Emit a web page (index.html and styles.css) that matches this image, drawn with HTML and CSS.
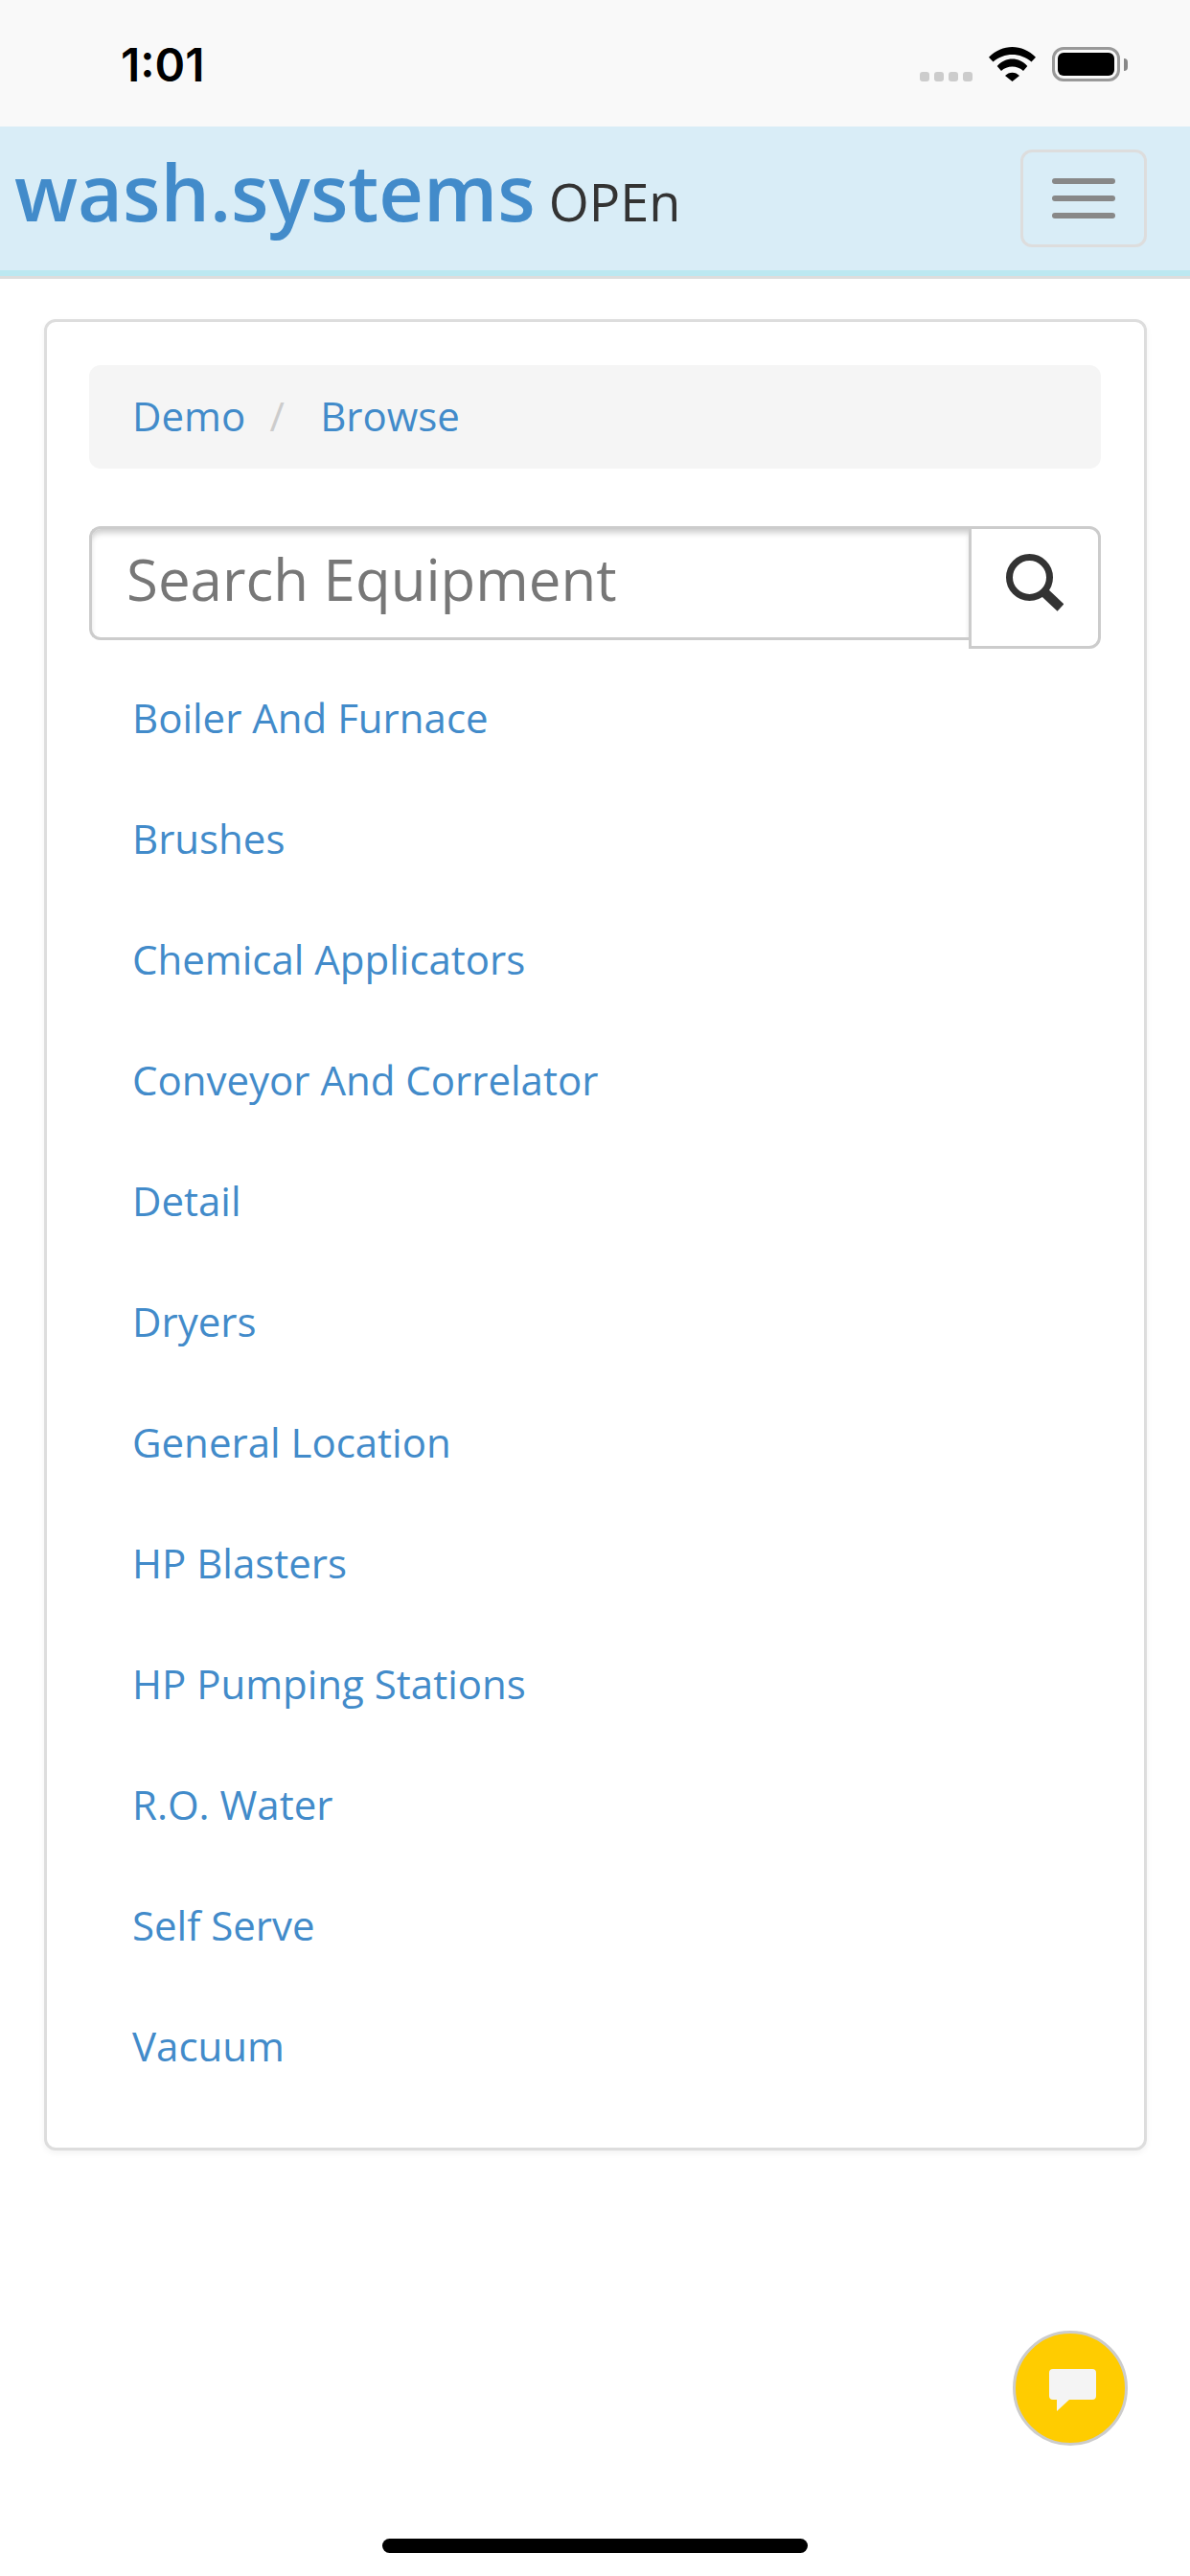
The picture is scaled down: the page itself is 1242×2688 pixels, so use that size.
FILE: index.html
```html
<!DOCTYPE html>
<html lang="en">
<head>
    <meta charset="UTF-8">
    <meta name="viewport" content="width=device-width, initial-scale=1.0">
    <title>Browse Equipment</title>
    <link rel="stylesheet" href="styles.css">
</head>
<body>
    <div class="status-bar">
        <span class="status-time">1:01</span>
        <div class="status-icons">
            <div class="signal"><i></i><i></i><i></i><i></i></div>
            <svg class="wifi" width="49" height="36" viewBox="0 0 49 36">
                <path d="M0 10.7C14-3.5 35-3.5 49 10.7L44.5 15.5C33 5.5 16 5.5 4.5 15.5Z"/>
                <path d="M8.7 20C17 10 32 10 40.3 20L36 25C30 19 19 19 13 25Z"/>
                <path d="M17 30C21 25.5 28 25.5 32 30L24.5 36Z"/>
            </svg>
            <div class="battery"><div class="battery-level"></div></div>
            <div class="battery-cap"></div>
        </div>
    </div>

    <nav class="navbar">
        <a class="brand" href="#">wash.systems</a>
        <span class="brand-sub">OPEn</span>
        <button class="navbar-toggle" type="button" aria-label="Menu">
            <span></span><span></span><span></span>
        </button>
    </nav>

    <main class="panel">
        <ol class="breadcrumb">
            <li><a href="#">Demo</a></li>
            <li class="divider">/</li>
            <li><a href="#">Browse</a></li>
        </ol>

        <form class="search">
            <input class="search-input" type="text" placeholder="Search Equipment">
            <button class="search-button" type="button" aria-label="Search">
                <svg width="60" height="60" viewBox="0 0 60 60" fill="none" stroke="#333">
                    <circle cx="24.5" cy="24.5" r="21" stroke-width="7"/>
                    <path d="M41 41L57 56" stroke-width="10"/>
                </svg>
            </button>
        </form>

        <ul class="equipment-list">
            <li><a href="#">Boiler And Furnace</a></li>
            <li><a href="#">Brushes</a></li>
            <li><a href="#">Chemical Applicators</a></li>
            <li><a href="#">Conveyor And Correlator</a></li>
            <li><a href="#">Detail</a></li>
            <li><a href="#">Dryers</a></li>
            <li><a href="#">General Location</a></li>
            <li><a href="#">HP Blasters</a></li>
            <li><a href="#">HP Pumping Stations</a></li>
            <li><a href="#">R.O. Water</a></li>
            <li><a href="#">Self Serve</a></li>
            <li><a href="#">Vacuum</a></li>
        </ul>
    </main>

    <button class="chat-button" type="button" aria-label="Chat">
        <svg width="49" height="44" viewBox="0 0 49 44">
            <path d="M4 0H45A4 4 0 0 1 49 4V28A4 4 0 0 1 45 32H21L8 44V32H4A4 4 0 0 1 0 28V4A4 4 0 0 1 4 0Z" fill="#f4f4f4"/>
        </svg>
    </button>
    <div class="home-bar"></div>
</body>
</html>
```

FILE: styles.css
```css
html, body {
    margin: 0;
    padding: 0;
}
body {
    position: relative;
    height: 2688px;
    overflow: hidden;
    background-color: #fff;
    font-family: "Open Sans", "Noto Sans", sans-serif;
    color: #333;
}
a {
    color: #428bca;
    text-decoration: none;
}
button {
    padding: 0;
    background: none;
    cursor: pointer;
}

/* status bar */
.status-bar {
    display: flex;
    justify-content: space-between;
    height: 132px;
    background-color: #f9f9f9;
    box-sizing: border-box;
    padding: 49px 65px 0 126px;
}
.status-time {
    font-family: Inter, sans-serif;
    font-weight: 600;
    font-size: 48px;
    line-height: 38px;
    color: #000;
}
.status-icons {
    display: flex;
    align-items: flex-start;
}
.signal {
    display: flex;
    gap: 5px;
    margin-top: 26px;
    margin-right: 17px;
}
.signal i {
    width: 10px;
    height: 10px;
    border-radius: 3px;
    background-color: #ccc;
}
.wifi {
    margin-right: 17px;
}
.battery {
    width: 71px;
    height: 36px;
    box-sizing: border-box;
    border: 3px solid #999;
    border-radius: 12px;
    padding: 3px;
}
.battery-level {
    height: 100%;
    background-color: #000;
    border-radius: 6px;
}
.battery-cap {
    width: 4px;
    height: 13px;
    margin: 12px 0 0 4px;
    background-color: #888;
    border-radius: 0 6px 6px 0;
}

/* navbar */
.navbar {
    display: flex;
    align-items: baseline;
    height: 156px;
    box-sizing: border-box;
    padding: 0 45px 0 15px;
    background-color: #d9edf7;
    border-bottom: 6px solid #bce8f1;
    box-shadow: 0 3px 0 #ddd;
}
.brand {
    font-weight: 600;
    font-size: 81px;
    line-height: 136px;
}
.brand-sub {
    margin-left: 14px;
    font-size: 54px;
}
.navbar-toggle {
    display: flex;
    flex-direction: column;
    align-items: center;
    justify-content: center;
    gap: 12px;
    align-self: flex-start;
    width: 132px;
    height: 102px;
    margin-top: 24px;
    margin-left: auto;
    border: 3px solid #ddd;
    border-radius: 12px;
}
.navbar-toggle span {
    width: 66px;
    height: 6px;
    border-radius: 3px;
    background-color: #888;
}

/* main panel */
.panel {
    margin: 45px 45px 0 46px;
    padding: 45px 45px 43px 44px;
    background-color: #fff;
    border: 3px solid #ddd;
    border-radius: 12px;
    box-shadow: 0 3px 6px rgba(0, 0, 0, 0.05);
}
.breadcrumb {
    display: flex;
    align-items: center;
    height: 108px;
    box-sizing: border-box;
    margin: 0 0 60px;
    padding: 0 45px 3px;
    list-style: none;
    background-color: #f5f5f5;
    border-radius: 12px;
    font-size: 42px;
}
.breadcrumb .divider {
    width: 78px;
    box-sizing: border-box;
    padding-right: 12px;
    text-align: center;
    color: #ccc;
}
.search {
    display: flex;
    align-items: flex-start;
    margin: 0 0 9px;
}
.search-input {
    flex: 1;
    min-width: 0;
    height: 119px;
    box-sizing: border-box;
    padding: 0 36px 10px;
    border: 3px solid #ccc;
    border-right: 0;
    border-radius: 12px 0 0 12px;
    box-shadow: inset 0 6px 6px -2px rgba(0, 0, 0, 0.2);
    background: #fff;
    font-family: inherit;
    font-size: 60px;
    color: #555;
    outline: none;
}
.search-input::placeholder {
    color: #777;
    opacity: 1;
}
.search-button {
    display: flex;
    align-items: center;
    justify-content: center;
    width: 138px;
    height: 128px;
    box-sizing: border-box;
    padding-bottom: 10px;
    border: 3px solid #ccc;
    border-radius: 0 12px 12px 0;
    background: #fff;
}
.equipment-list {
    margin: 0;
    padding: 0;
    list-style: none;
    font-size: 42px;
}
.equipment-list a {
    display: block;
    padding: 33px 45px;
    line-height: 60px;
}

/* overlays */
.chat-button {
    position: absolute;
    left: 1057px;
    top: 2432px;
    display: flex;
    align-items: center;
    justify-content: center;
    width: 120px;
    height: 120px;
    box-sizing: border-box;
    padding: 4px 0 0 4px;
    border: 3px solid #ccc;
    border-radius: 50%;
    background-color: #fc0;
}
.home-bar {
    position: absolute;
    left: 399px;
    top: 2649px;
    width: 444px;
    height: 15px;
    border-radius: 8px;
    background-color: #000;
}
```
